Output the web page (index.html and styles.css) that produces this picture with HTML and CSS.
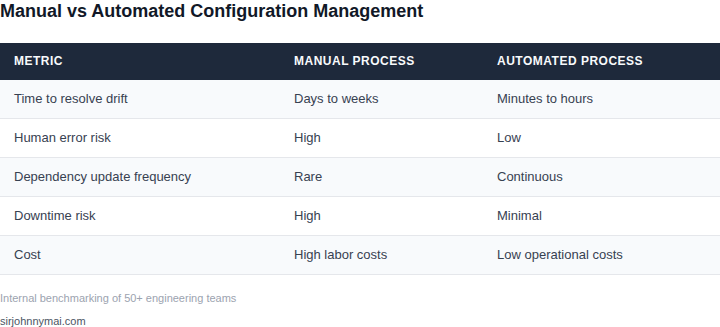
FILE: index.html
```html
<!DOCTYPE html>
<html>
<head>
<meta charset="utf-8">
<link rel="stylesheet" href="styles.css">
</head>
<body>
<div class="page">
  <h1 class="title">Manual vs Automated Configuration Management</h1>
  <table class="cmp">
    <colgroup><col class="c1"><col class="c2"><col class="c3"></colgroup>
    <thead>
      <tr><th>Metric</th><th>Manual Process</th><th>Automated Process</th></tr>
    </thead>
    <tbody>
      <tr><td>Time to resolve drift</td><td>Days to weeks</td><td>Minutes to hours</td></tr>
      <tr><td>Human error risk</td><td>High</td><td>Low</td></tr>
      <tr><td>Dependency update frequency</td><td>Rare</td><td>Continuous</td></tr>
      <tr><td>Downtime risk</td><td>High</td><td>Minimal</td></tr>
      <tr><td>Cost</td><td>High labor costs</td><td>Low operational costs</td></tr>
    </tbody>
  </table>
  <p class="source">Internal benchmarking of 50+ engineering teams</p>
  <p class="site">sirjohnnymai.com</p>
</div>
</body>
</html>
```
FILE: styles.css
```css
html, body { margin: 0; padding: 0; background: #ffffff; }
body { font-family: "Liberation Sans", Arial, sans-serif; color: #1e293b; }
.page { width: 720px; }
.title {
  margin: 0;
  font-size: 18px;
  line-height: 22px;
  font-weight: 700;
  color: #111827;
  padding-bottom: 21px;
}
.cmp { width: 100%; border-collapse: collapse; }
.c1 { width: 280px; }
.c2 { width: 203px; }
.cmp th {
  background: #1e293b;
  color: #f8fafc;
  text-align: left;
  text-transform: uppercase;
  font-size: 12px;
  font-weight: 700;
  letter-spacing: 0.5px;
  line-height: 14.5px;
  padding: 11px 14px;
}
.cmp td {
  font-size: 13px;
  line-height: 14px;
  color: #374151;
  padding: 12px 14px;
  border-bottom: 1px solid #e5e7eb;
}
.cmp tbody tr:nth-child(odd) td { background: #f8fafc; }
.source {
  margin: 16px 0 0;
  font-size: 11px;
  line-height: 14px;
  color: #9ca3af;
}
.site {
  margin: 9px 0 0;
  font-size: 11px;
  line-height: 14px;
  color: #4b5563;
}
```
